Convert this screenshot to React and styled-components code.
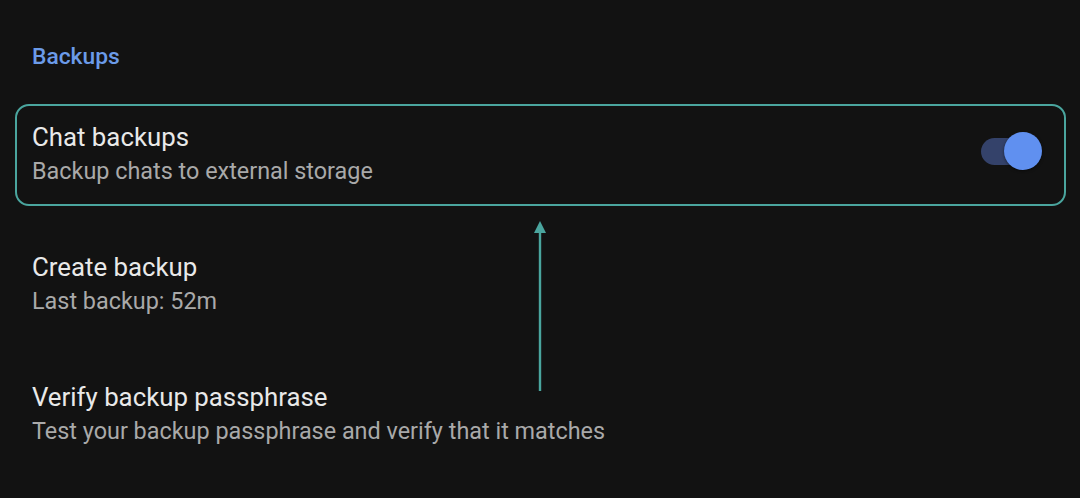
import { styled, createGlobalStyle } from "styled-components";

const GlobalStyle = createGlobalStyle`
  html, body {
    margin: 0;
    padding: 0;
    background: #121212;
  }
  body {
    font-family: Roboto, "Noto Sans", sans-serif;
  }
`;

const rows = [
  { title: "Chat backups", sub: "Backup chats to external storage", toggle: true, highlight: true },
  { title: "Create backup", sub: "Last backup: 52m" },
  { title: "Verify backup passphrase", sub: "Test your backup passphrase and verify that it matches" },
];

function App() {
  return (
    <>
      <GlobalStyle />
      <Page>
        <SectionHeader>Backups</SectionHeader>
        <List>
          {rows.map((row) => (
            <Row key={row.title} $highlight={row.highlight}>
              <RowText>
                <RowTitle>{row.title}</RowTitle>
                <RowSub>{row.sub}</RowSub>
              </RowText>
              {row.toggle && (
                <Switch>
                  <Track />
                  <Thumb />
                </Switch>
              )}
            </Row>
          ))}
        </List>
        <Arrow width="14" height="170" viewBox="0 0 14 170">
          <polygon points="7,0 1,12 13,12" fill="#4aa59e" />
          <rect x="5.8" y="8" width="2.4" height="162" fill="#4aa59e" />
        </Arrow>
      </Page>
    </>
  );
}

const Page = styled.div`
  position: relative;
  width: 1080px;
  height: 498px;
  overflow: hidden;
  background: #121212;
`;

const SectionHeader = styled.h2`
  margin: 0;
  padding: 44px 32px 19px;
  font-size: 22.8px;
  line-height: 26px;
  font-weight: 500;
  color: #6b9be9;
`;

const List = styled.div`
  display: flex;
  flex-direction: column;
`;

const Row = styled.div`
  position: relative;
  height: 130px;
  box-sizing: border-box;
  display: flex;
  align-items: center;
  justify-content: space-between;
  padding: 0 38px 0 32px;

  &::after {
    content: "";
    display: ${(p) => (p.$highlight ? "block" : "none")};
    position: absolute;
    top: 15px;
    bottom: 13px;
    left: 15px;
    right: 14px;
    border: 2px solid #4aa59e;
    border-radius: 14px;
    pointer-events: none;
  }
`;

const RowText = styled.div`
  display: flex;
  flex-direction: column;
`;

const RowTitle = styled.div`
  font-size: 25.8px;
  line-height: 34px;
  color: #e9e9e9;
`;

const RowSub = styled.div`
  font-size: 23.4px;
  line-height: 34px;
  color: #a9a9a9;
`;

const Switch = styled.div`
  position: relative;
  width: 61px;
  height: 40px;
  margin-bottom: 4px;
`;

const Track = styled.div`
  position: absolute;
  left: 0;
  top: 6px;
  width: 40px;
  height: 27px;
  border-radius: 14px;
  background: #34426a;
`;

const Thumb = styled.div`
  position: absolute;
  right: 0;
  top: 0;
  width: 38px;
  height: 38px;
  border-radius: 50%;
  background: #6090f0;
  box-shadow: 0 1px 3px rgba(0, 0, 0, 0.5);
`;

const Arrow = styled.svg`
  position: absolute;
  left: 533px;
  top: 221px;
`;

export default App;
